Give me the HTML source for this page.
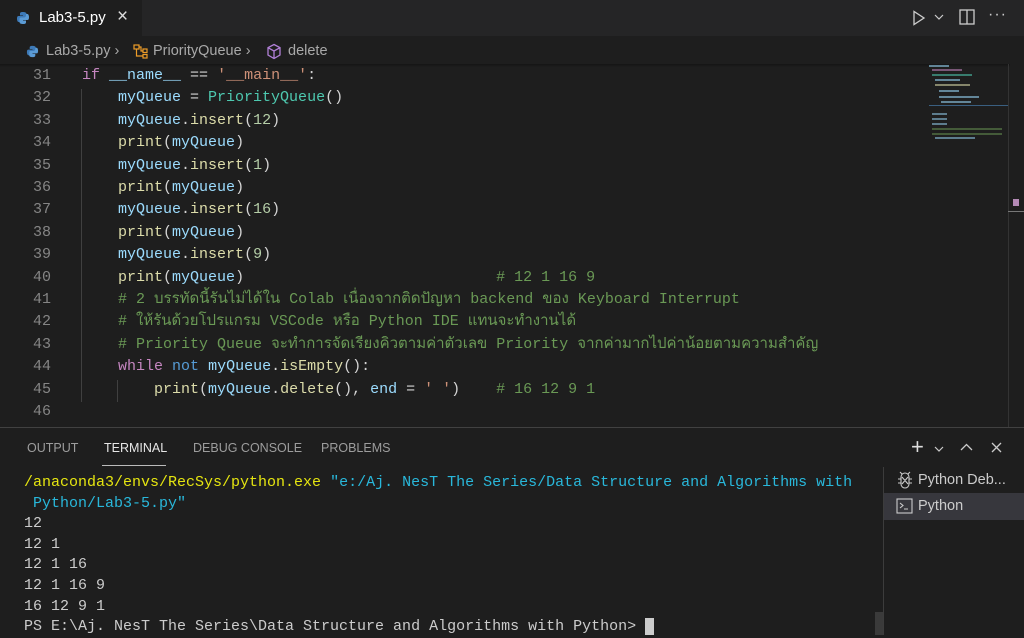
<!DOCTYPE html>
<html><head><meta charset="utf-8"><style>
*{margin:0;padding:0;box-sizing:border-box}
body{width:1024px;height:635px;background:#1e1e1e;overflow:hidden;position:relative;font-family:"Liberation Sans","Noto Sans CJK SC",sans-serif;color:#ccc}
.abs{position:absolute}
.mono{font-family:"Liberation Mono","DejaVu Sans Mono",monospace;white-space:pre}
.code{font-size:15px;line-height:22.4px}
.ln{position:absolute;left:0;width:51px;text-align:right;color:#858585;font-family:"Liberation Mono",monospace;font-size:15px;line-height:22.4px;white-space:pre}
.k{color:#c586c0}.b{color:#569cd6}.v{color:#9cdcfe}.c{color:#4ec9b0}.s{color:#ce9178}.f{color:#dcdcaa}.cm{color:#6a9955}.n{color:#b5cea8}.p{color:#d4d4d4}
.term{font-size:15px;line-height:20.6px;color:#ccc}
</style></head><body>
<div class="abs" style="left:0;top:0;width:1024px;height:36px;background:#252526"></div>
<div class="abs" style="left:0;top:0;width:142px;height:36px;background:#1e1e1e"></div>
<svg class="abs" style="left:16px;top:11px" width="14" height="14" viewBox="0 0 14 14"><path d="M7 1C4 1 4 2 4 3v1.5h3V5H2.5C1 5 1 7 1 8s.5 3 1.5 3H4V9.5c0-1 1-2 2-2h3c1 0 1.5-.5 1.5-1.5V3C10.5 1.5 9 1 7 1z" fill="#3d7ab8"/><path d="M7 13c3 0 3-1 3-2V9.5H7V9h4.5c1.5 0 1.5-2 1.5-3s-.5-3-1.5-3H10v1.5c0 1-1 2-2 2H5c-1 0-1.5.5-1.5 1.5V11C3.5 12.5 5 13 7 13z" fill="#5b9bd5"/></svg>
<div class="abs" style="left:39px;top:9px;font-size:15px;color:#fff">Lab3-5.py</div>
<div class="abs" style="left:117px;top:6px;font-size:19px;color:#ddd">×</div>
<svg class="abs" style="left:912px;top:10px" width="14" height="16" viewBox="0 0 14 16"><path d="M2 1.5v13l10-6.5z" fill="none" stroke="#ccc" stroke-width="1.3"/></svg>
<svg class="abs" style="left:934px;top:14px" width="10" height="7"><path d="M1 1l4 4 4-4" fill="none" stroke="#ccc" stroke-width="1.2"/></svg>
<svg class="abs" style="left:959px;top:9px" width="16" height="16"><rect x="1" y="1" width="14" height="14" fill="none" stroke="#ccc" stroke-width="1.3"/><path d="M8 1v14" stroke="#ccc" stroke-width="1.3"/></svg>
<div class="abs" style="left:988px;top:6px;font-size:16px;color:#ccc;letter-spacing:1px">···</div>
<svg class="abs" style="left:26px;top:45px" width="13" height="13" viewBox="0 0 14 14"><path d="M7 1C4 1 4 2 4 3v1.5h3V5H2.5C1 5 1 7 1 8s.5 3 1.5 3H4V9.5c0-1 1-2 2-2h3c1 0 1.5-.5 1.5-1.5V3C10.5 1.5 9 1 7 1z" fill="#3d7ab8"/><path d="M7 13c3 0 3-1 3-2V9.5H7V9h4.5c1.5 0 1.5-2 1.5-3s-.5-3-1.5-3H10v1.5c0 1-1 2-2 2H5c-1 0-1.5.5-1.5 1.5V11C3.5 12.5 5 13 7 13z" fill="#5b9bd5"/></svg>
<div class="abs" style="left:46px;top:43px;font-size:14.5px;color:#a9a9a9">Lab3-5.py <span style="color:#aaa">›</span></div>
<svg class="abs" style="left:133px;top:44px" width="16" height="15" viewBox="0 0 16 15"><rect x="1" y="1" width="5" height="4" fill="none" stroke="#ee9d28" stroke-width="1.2"/><rect x="10" y="5" width="4" height="3.5" fill="none" stroke="#ee9d28" stroke-width="1.2"/><rect x="10" y="10.5" width="4" height="3.5" fill="none" stroke="#ee9d28" stroke-width="1.2"/><path d="M3.5 5v7h6.5M6 3h2v4h2" fill="none" stroke="#ee9d28" stroke-width="1.2"/></svg>
<div class="abs" style="left:153px;top:43px;font-size:14.5px;color:#a9a9a9">PriorityQueue <span>›</span></div>
<svg class="abs" style="left:266px;top:43px" width="16" height="17" viewBox="0 0 16 17"><path d="M8 1.5l6 3.2v7.3L8 15.5 2 12V4.7z M2 4.7l6 3.3 6-3.3 M8 8v7.5" fill="none" stroke="#b180d7" stroke-width="1.3"/></svg>
<div class="abs" style="left:288px;top:43px;font-size:14.5px;color:#a9a9a9">delete</div>
<div class="abs" style="left:0;top:64px;width:1010px;height:3px;background:linear-gradient(#141414,#1e1e1e)"></div>
<div class="ln" style="top:65px">31
32
33
34
35
36
37
38
39
40
41
42
43
44
45
46</div>
<div class="abs" style="left:81px;top:89px;width:1px;height:313px;background:#404040"></div>
<div class="abs" style="left:117px;top:380px;width:1px;height:22px;background:#404040"></div>
<div class="abs mono code" style="left:82px;top:65px;color:#d4d4d4"><span class="k">if</span> <span class="v">__name__</span> == <span class="s">'__main__'</span>:
    <span class="v">myQueue</span> = <span class="c">PriorityQueue</span>()
    <span class="v">myQueue</span>.<span class="f">insert</span>(<span class="n">12</span>)
    <span class="f">print</span>(<span class="v">myQueue</span>)
    <span class="v">myQueue</span>.<span class="f">insert</span>(<span class="n">1</span>)
    <span class="f">print</span>(<span class="v">myQueue</span>)
    <span class="v">myQueue</span>.<span class="f">insert</span>(<span class="n">16</span>)
    <span class="f">print</span>(<span class="v">myQueue</span>)
    <span class="v">myQueue</span>.<span class="f">insert</span>(<span class="n">9</span>)
    <span class="f">print</span>(<span class="v">myQueue</span>)                            <span class="cm"># 12 1 16 9</span>
    <span class="cm"># 2 บรรทัดนี้รันไม่ได้ใน Colab เนื่องจากติดปัญหา backend ของ Keyboard Interrupt</span>
    <span class="cm"># ให้รันด้วยโปรแกรม VSCode หรือ Python IDE แทนจะทำงานได้</span>
    <span class="cm"># Priority Queue จะทำการจัดเรียงคิวตามค่าตัวเลข Priority จากค่ามากไปค่าน้อยตามความสำคัญ</span>
    <span class="k">while</span> <span class="b">not</span> <span class="v">myQueue</span>.<span class="f">isEmpty</span>():
        <span class="f">print</span>(<span class="v">myQueue</span>.<span class="f">delete</span>(), <span class="v">end</span> = <span class="s">' '</span>)    <span class="cm"># 16 12 9 1</span>
</div>
<div class="abs" style="left:929px;top:64px;width:80px;height:75px;opacity:.55">
<div style="height:2px;width:20px;background:#9cdcfe;margin:1px 0"></div>
<div style="height:2px;width:30px;background:#c586c0;margin:2px 3px"></div>
<div style="height:2px;width:40px;background:#4ec9b0;margin:3px 3px"></div>
<div style="height:2px;width:25px;background:#9cdcfe;margin:3px 6px"></div>
<div style="height:2px;width:35px;background:#dcdcaa;margin:3px 6px"></div>
<div style="height:2px;width:20px;background:#9cdcfe;margin:4px 10px"></div>
<div style="height:2px;width:40px;background:#9cdcfe;margin:3px 10px"></div>
<div style="height:2px;width:30px;background:#9cdcfe;margin:3px 12px"></div>
</div>
<div class="abs" style="left:929px;top:105px;width:80px;height:1px;background:#3a5f80"></div>
<div class="abs" style="left:929px;top:110px;width:80px;height:30px;opacity:.5">
<div style="height:2px;width:15px;background:#9cdcfe;margin:3px 3px"></div>
<div style="height:2px;width:15px;background:#9cdcfe;margin:3px 3px"></div>
<div style="height:2px;width:15px;background:#9cdcfe;margin:3px 3px"></div>
<div style="height:2px;width:70px;background:#6a9955;margin:3px 3px"></div>
<div style="height:2px;width:70px;background:#6a9955;margin:1px 3px"></div>
<div style="height:2px;width:40px;background:#9cdcfe;margin:2px 6px"></div>
</div>
<div class="abs" style="left:1008px;top:64px;width:1px;height:364px;background:#333"></div>
<div class="abs" style="left:1013px;top:199px;width:6px;height:7px;background:#b48ab5"></div>
<div class="abs" style="left:1008px;top:211px;width:16px;height:1px;background:#777"></div>
<div class="abs" style="left:0;top:427px;width:1024px;height:1px;background:#414141"></div>
<div class="abs" style="left:27px;top:441px;font-size:12.5px;color:#9d9d9d">OUTPUT</div>
<div class="abs" style="left:104px;top:441px;font-size:12.5px;color:#e7e7e7">TERMINAL</div>
<div class="abs" style="left:102px;top:465px;width:64px;height:1px;background:#bbb"></div>
<div class="abs" style="left:193px;top:441px;font-size:12.5px;color:#9d9d9d">DEBUG CONSOLE</div>
<div class="abs" style="left:321px;top:441px;font-size:12.5px;color:#9d9d9d">PROBLEMS</div>
<div class="abs" style="left:911px;top:434px;font-size:22px;color:#ddd;font-weight:300">+</div>
<svg class="abs" style="left:934px;top:446px" width="10" height="7"><path d="M1 1l4 4 4-4" fill="none" stroke="#ccc" stroke-width="1.2"/></svg>
<svg class="abs" style="left:960px;top:443px" width="13" height="9"><path d="M1 7l5.5-5.5L12 7" fill="none" stroke="#ccc" stroke-width="1.3"/></svg>
<svg class="abs" style="left:991px;top:442px" width="11" height="11"><path d="M1 1l9 9M10 1l-9 9" stroke="#ccc" stroke-width="1.3"/></svg>
<div class="abs mono term" style="left:24px;top:473px"><span style="color:#e5e510">/anaconda3/envs/RecSys/python.exe</span> <span style="color:#29b8db">"e:/Aj. NesT The Series/Data Structure and Algorithms with
 Python/Lab3-5.py"</span>
12
12 1
12 1 16
12 1 16 9
16 12 9 1
PS E:\Aj. NesT The Series\Data Structure and Algorithms with Python> <span style="background:#ccc">&nbsp;</span></div>
<div class="abs" style="left:875px;top:612px;width:8px;height:23px;background:#3a3a3a"></div>
<div class="abs" style="left:883px;top:467px;width:1px;height:168px;background:#3c3c3c"></div>
<svg class="abs" style="left:896px;top:471px" width="18" height="18" viewBox="0 0 18 18"><path d="M5 6a4 4 0 0 1 8 0v7a4 4 0 0 1-8 0z M6 6l6 7M12 6l-6 7 M2 8h3M13 8h3M2 12h3M13 12h3M6 3L4 1M12 3l2-2" fill="none" stroke="#ccc" stroke-width="1.1"/></svg>
<div class="abs" style="left:918px;top:472px;font-size:14.5px;color:#ccc">Python Deb...</div>
<div class="abs" style="left:884px;top:493px;width:140px;height:27px;background:#37373d"></div>
<svg class="abs" style="left:896px;top:498px" width="17" height="16" viewBox="0 0 17 16"><rect x="1" y="1" width="15" height="14" fill="none" stroke="#ccc" stroke-width="1.1"/><path d="M4 5l3 2.5L4 10M8 11h4" fill="none" stroke="#ccc" stroke-width="1.1"/></svg>
<div class="abs" style="left:918px;top:498px;font-size:14.5px;color:#ccc">Python</div>
</body></html>
